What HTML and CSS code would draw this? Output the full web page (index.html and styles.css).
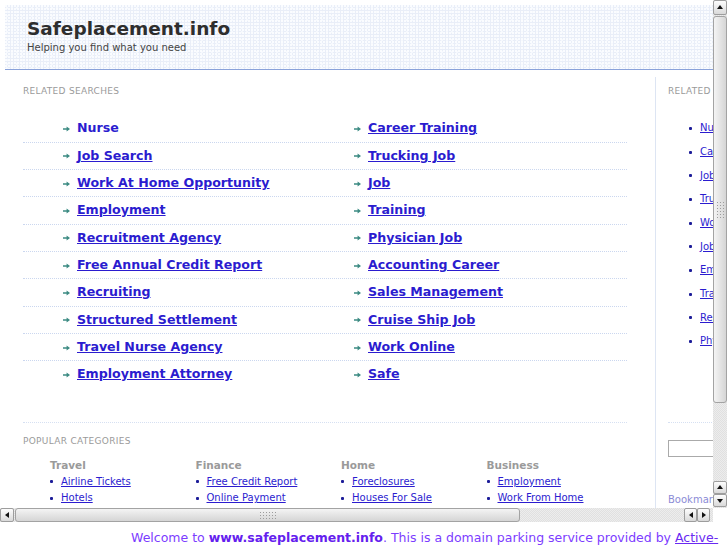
FILE: index.html
```html
<!DOCTYPE html>
<html lang="en">
<head>
    <meta charset="UTF-8">
    <title>Safeplacement.info</title>
    <link rel="stylesheet" href="styles.css">
</head>
<body>

    <div class="frame">
        <div class="viewport">
            <div class="page">
                <div class="header">
                    <h1 class="site-title">Safeplacement.info</h1>
                    <p class="tagline">Helping you find what you need</p>
                </div>

                <div class="content">
                    <div class="main">
                        <h3 class="section-label">Related Searches</h3>
                        <ul class="searches">
                            <li class="row">
                                <div class="cell"><svg class="arrow" width="7" height="6" viewBox="0 0 7 6"><path d="M0 2.2h3.6V0.4L7 3 3.6 5.6V3.8H0z"/></svg><a href="#" class="plain">Nurse</a></div>
                                <div class="cell"><svg class="arrow" width="7" height="6" viewBox="0 0 7 6"><path d="M0 2.2h3.6V0.4L7 3 3.6 5.6V3.8H0z"/></svg><a href="#">Career Training</a></div>
                            </li>
                            <li class="row">
                                <div class="cell"><svg class="arrow" width="7" height="6" viewBox="0 0 7 6"><path d="M0 2.2h3.6V0.4L7 3 3.6 5.6V3.8H0z"/></svg><a href="#">Job Search</a></div>
                                <div class="cell"><svg class="arrow" width="7" height="6" viewBox="0 0 7 6"><path d="M0 2.2h3.6V0.4L7 3 3.6 5.6V3.8H0z"/></svg><a href="#">Trucking Job</a></div>
                            </li>
                            <li class="row">
                                <div class="cell"><svg class="arrow" width="7" height="6" viewBox="0 0 7 6"><path d="M0 2.2h3.6V0.4L7 3 3.6 5.6V3.8H0z"/></svg><a href="#">Work At Home Opportunity</a></div>
                                <div class="cell"><svg class="arrow" width="7" height="6" viewBox="0 0 7 6"><path d="M0 2.2h3.6V0.4L7 3 3.6 5.6V3.8H0z"/></svg><a href="#">Job</a></div>
                            </li>
                            <li class="row">
                                <div class="cell"><svg class="arrow" width="7" height="6" viewBox="0 0 7 6"><path d="M0 2.2h3.6V0.4L7 3 3.6 5.6V3.8H0z"/></svg><a href="#">Employment</a></div>
                                <div class="cell"><svg class="arrow" width="7" height="6" viewBox="0 0 7 6"><path d="M0 2.2h3.6V0.4L7 3 3.6 5.6V3.8H0z"/></svg><a href="#">Training</a></div>
                            </li>
                            <li class="row">
                                <div class="cell"><svg class="arrow" width="7" height="6" viewBox="0 0 7 6"><path d="M0 2.2h3.6V0.4L7 3 3.6 5.6V3.8H0z"/></svg><a href="#">Recruitment Agency</a></div>
                                <div class="cell"><svg class="arrow" width="7" height="6" viewBox="0 0 7 6"><path d="M0 2.2h3.6V0.4L7 3 3.6 5.6V3.8H0z"/></svg><a href="#">Physician Job</a></div>
                            </li>
                            <li class="row">
                                <div class="cell"><svg class="arrow" width="7" height="6" viewBox="0 0 7 6"><path d="M0 2.2h3.6V0.4L7 3 3.6 5.6V3.8H0z"/></svg><a href="#">Free Annual Credit Report</a></div>
                                <div class="cell"><svg class="arrow" width="7" height="6" viewBox="0 0 7 6"><path d="M0 2.2h3.6V0.4L7 3 3.6 5.6V3.8H0z"/></svg><a href="#">Accounting Career</a></div>
                            </li>
                            <li class="row">
                                <div class="cell"><svg class="arrow" width="7" height="6" viewBox="0 0 7 6"><path d="M0 2.2h3.6V0.4L7 3 3.6 5.6V3.8H0z"/></svg><a href="#">Recruiting</a></div>
                                <div class="cell"><svg class="arrow" width="7" height="6" viewBox="0 0 7 6"><path d="M0 2.2h3.6V0.4L7 3 3.6 5.6V3.8H0z"/></svg><a href="#">Sales Management</a></div>
                            </li>
                            <li class="row">
                                <div class="cell"><svg class="arrow" width="7" height="6" viewBox="0 0 7 6"><path d="M0 2.2h3.6V0.4L7 3 3.6 5.6V3.8H0z"/></svg><a href="#">Structured Settlement</a></div>
                                <div class="cell"><svg class="arrow" width="7" height="6" viewBox="0 0 7 6"><path d="M0 2.2h3.6V0.4L7 3 3.6 5.6V3.8H0z"/></svg><a href="#">Cruise Ship Job</a></div>
                            </li>
                            <li class="row">
                                <div class="cell"><svg class="arrow" width="7" height="6" viewBox="0 0 7 6"><path d="M0 2.2h3.6V0.4L7 3 3.6 5.6V3.8H0z"/></svg><a href="#">Travel Nurse Agency</a></div>
                                <div class="cell"><svg class="arrow" width="7" height="6" viewBox="0 0 7 6"><path d="M0 2.2h3.6V0.4L7 3 3.6 5.6V3.8H0z"/></svg><a href="#">Work Online</a></div>
                            </li>
                            <li class="row">
                                <div class="cell"><svg class="arrow" width="7" height="6" viewBox="0 0 7 6"><path d="M0 2.2h3.6V0.4L7 3 3.6 5.6V3.8H0z"/></svg><a href="#">Employment Attorney</a></div>
                                <div class="cell"><svg class="arrow" width="7" height="6" viewBox="0 0 7 6"><path d="M0 2.2h3.6V0.4L7 3 3.6 5.6V3.8H0z"/></svg><a href="#">Safe</a></div>
                            </li>
                        </ul>

                        <div class="categories">
                            <h3 class="section-label">Popular Categories</h3>
                            <div class="cat-grid">
                                <div class="cat">
                                    <h4>Travel</h4>
                                    <ul class="bullets">
                                        <li><a href="#">Airline Tickets</a></li>
                                        <li><a href="#">Hotels</a></li>
                                    </ul>
                                </div>
                                <div class="cat">
                                    <h4>Finance</h4>
                                    <ul class="bullets">
                                        <li><a href="#">Free Credit Report</a></li>
                                        <li><a href="#">Online Payment</a></li>
                                    </ul>
                                </div>
                                <div class="cat">
                                    <h4>Home</h4>
                                    <ul class="bullets">
                                        <li><a href="#">Foreclosures</a></li>
                                        <li><a href="#">Houses For Sale</a></li>
                                    </ul>
                                </div>
                                <div class="cat">
                                    <h4>Business</h4>
                                    <ul class="bullets">
                                        <li><a href="#">Employment</a></li>
                                        <li><a href="#">Work From Home</a></li>
                                    </ul>
                                </div>
                            </div>
                        </div>
                    </div>

                    <div class="side">
                        <h3 class="section-label">Related Searches</h3>
                        <ul class="bullets side-links">
                            <li><a href="#">Nurse</a></li>
                            <li><a href="#">Career Training</a></li>
                            <li><a href="#">Job Search</a></li>
                            <li><a href="#">Trucking Job</a></li>
                            <li><a href="#">Work At Home Opportunity</a></li>
                            <li><a href="#">Job</a></li>
                            <li><a href="#">Employment</a></li>
                            <li><a href="#">Training</a></li>
                            <li><a href="#">Recruitment Agency</a></li>
                            <li><a href="#">Physician Job</a></li>
                        </ul>
                        <div class="side-sep"></div>
                        <input class="search-box" type="text">
                        <div class="bookmark">Bookmark this page</div>
                    </div>
                </div>
            </div>
        </div>

        <div class="vscroll">
            <div class="sb-btn up"></div>
            <div class="thumb thumb-v"><div class="grip"></div></div>
            <div class="track-fill"></div>
            <div class="sb-btn up"></div>
            <div class="sb-btn down"></div>
        </div>

        <div class="hscroll">
            <div class="sb-btn left"></div>
            <div class="thumb thumb-h"><div class="grip"></div></div>
            <div class="track-fill"></div>
            <div class="sb-btn left"></div>
            <div class="sb-btn right"></div>
        </div>

        <div class="corner"></div>
    </div>

    <div class="welcome">
        Welcome to <b>www.safeplacement.info</b>. This is a domain parking service provided by <a href="#">Active-</a>
    </div>

</body>
</html>
```

FILE: styles.css
```css
html, body {
    margin: 0;
    height: 100%;
    overflow: hidden;
}

body {
    font-family: "DejaVu Sans", Verdana, sans-serif;
    background: #fff;
}

a {
    color: #2b1ccf;
}

/* framed page with scrollbars */
.frame {
    display: grid;
    grid-template-columns: 713px 14px;
    grid-template-rows: 508px 14px;
}

.viewport {
    overflow: hidden;
}

.page {
    width: 900px;
    padding: 5px 0 0 5px;
}

.header {
    height: 50px;
    padding: 14px 0 0 22px;
    border-bottom: 1px solid #8aa2da;
    background-color: #e9eef8;
    background-image:
        radial-gradient(circle at 1px 1px, #fbfcff 0.7px, transparent 1px),
        radial-gradient(circle at 2px 3px, #f6f8fd 0.7px, transparent 1px);
    background-size: 3px 3px, 5px 4px;
}

.site-title {
    margin: 0;
    font-size: 18.5px;
    line-height: 20px;
    font-weight: bold;
    color: #2e2e2e;
}

.tagline {
    margin: 2px 0 0;
    font-size: 10px;
    line-height: 13px;
    color: #444;
}

.content {
    display: flex;
    margin-top: 7px;
}

.main {
    width: 604px;
    padding: 8px 28px 0 18px;
}

.section-label {
    margin: 0;
    font-size: 9px;
    line-height: 12px;
    font-weight: normal;
    letter-spacing: 0.3px;
    text-transform: uppercase;
    color: #9a9a9a;
}

.searches {
    list-style: none;
    margin: 18.3px 0 0;
    padding: 0;
}

.row {
    display: grid;
    grid-template-columns: 291px 1fr;
    padding-left: 40px;
    line-height: 26.33px;
    border-bottom: 1px dotted #cbd7ef;
}

.row:last-child {
    border-bottom: none;
}

.cell {
    display: flex;
    align-items: center;
    gap: 7px;
}

.cell a {
    font-size: 12.6px;
    font-weight: bold;
}

.cell a.plain {
    text-decoration: none;
}

.arrow {
    fill: #3b8a82;
    margin-top: 1px;
}

.categories {
    margin-top: 34px;
    padding-top: 12px;
    border-top: 1px dotted #d6e0f2;
}

.cat-grid {
    display: grid;
    grid-template-columns: repeat(4, 145.5px);
    padding-left: 27px;
    margin-top: 10.8px;
}

.cat h4 {
    margin: 0;
    font-size: 10.5px;
    line-height: 16px;
    color: #9a9a9a;
}

.bullets {
    list-style: none;
    margin: 0.5px 0 0;
    padding: 0;
}

.bullets li {
    font-size: 10px;
    line-height: 16.3px;
    white-space: nowrap;
}

.bullets li::before {
    content: "";
    display: inline-block;
    width: 3px;
    height: 3px;
    margin-right: 8px;
    background: #1d1d99;
    border-radius: 1px;
    vertical-align: middle;
}

/* right column */
.side {
    width: 200px;
    min-height: 460px;
    padding: 8px 0 0 12px;
    border-left: 1px solid #dde5f3;
}

.side-links {
    margin-top: 19.35px;
    padding-left: 21px;
}

.side-links li {
    line-height: 23.67px;
}

.side-sep {
    margin-top: 68.7px;
    border-top: 1px dotted #d6e0f2;
}

.search-box {
    display: block;
    box-sizing: border-box;
    width: 150px;
    height: 17px;
    margin-top: 17px;
    padding: 0;
    border: 1px solid #aaa;
}

.bookmark {
    margin-top: 37px;
    font-size: 10px;
    color: #8b8bd6;
}

/* scrollbars */
.vscroll, .hscroll {
    display: flex;
    background: repeating-conic-gradient(#e0e0e0 0 25%, #ededed 0 50%) 0 0 / 2px 2px;
}

.vscroll {
    flex-direction: column;
}

.track-fill {
    flex: 1;
}

.sb-btn {
    flex: none;
    width: 14px;
    height: 13px;
    box-sizing: border-box;
    border: 1px solid #9d9d9d;
    border-radius: 2px;
    background: linear-gradient(#fdfdfd, #d9d9d9);
    display: flex;
    align-items: center;
    justify-content: center;
}

.vscroll .sb-btn:first-child {
    height: 15px;
}

.vscroll .sb-btn:last-child {
    margin-bottom: 1px;
}

.hscroll .sb-btn {
    width: 13px;
    height: 14px;
}

.hscroll .sb-btn:first-child {
    width: 14px;
}

.hscroll .sb-btn:last-child {
    margin-right: 3px;
}

.sb-btn::after {
    content: "";
    border: 3px solid transparent;
}

.up::after {
    border-bottom: 4px solid #111;
    border-top: none;
    margin-top: -1px;
}

.down::after {
    border-top: 4px solid #111;
    border-bottom: none;
}

.left::after {
    border-right: 4px solid #111;
    border-left: none;
}

.right::after {
    border-left: 4px solid #111;
    border-right: none;
}

.thumb {
    flex: none;
    box-sizing: border-box;
    border: 1px solid #a3a3a3;
    border-radius: 3px;
    display: flex;
    align-items: center;
    justify-content: center;
}

.thumb-v {
    height: 387px;
    margin-top: 1px;
    background: linear-gradient(to right, #f4f4f4, #d5d5d5);
}

.thumb-h {
    width: 505px;
    margin-left: 1px;
    background: linear-gradient(#f4f4f4, #d5d5d5);
}

.grip {
    background-image: radial-gradient(circle, #9c9c9c 0.7px, transparent 1px);
    background-size: 3px 3px;
}

.thumb-h .grip {
    width: 18px;
    height: 9px;
}

.thumb-v .grip {
    width: 9px;
    height: 18px;
}

.corner {
    background: #fff;
}

/* parking notice */
.welcome {
    height: 19px;
    padding: 4px 0 0 131px;
    overflow: hidden;
    white-space: nowrap;
    font-size: 12.5px;
    line-height: 23px;
    color: #7c3cff;
}

.welcome b {
    color: #6420ee;
}

.welcome a {
    color: #6a2af2;
}
```
